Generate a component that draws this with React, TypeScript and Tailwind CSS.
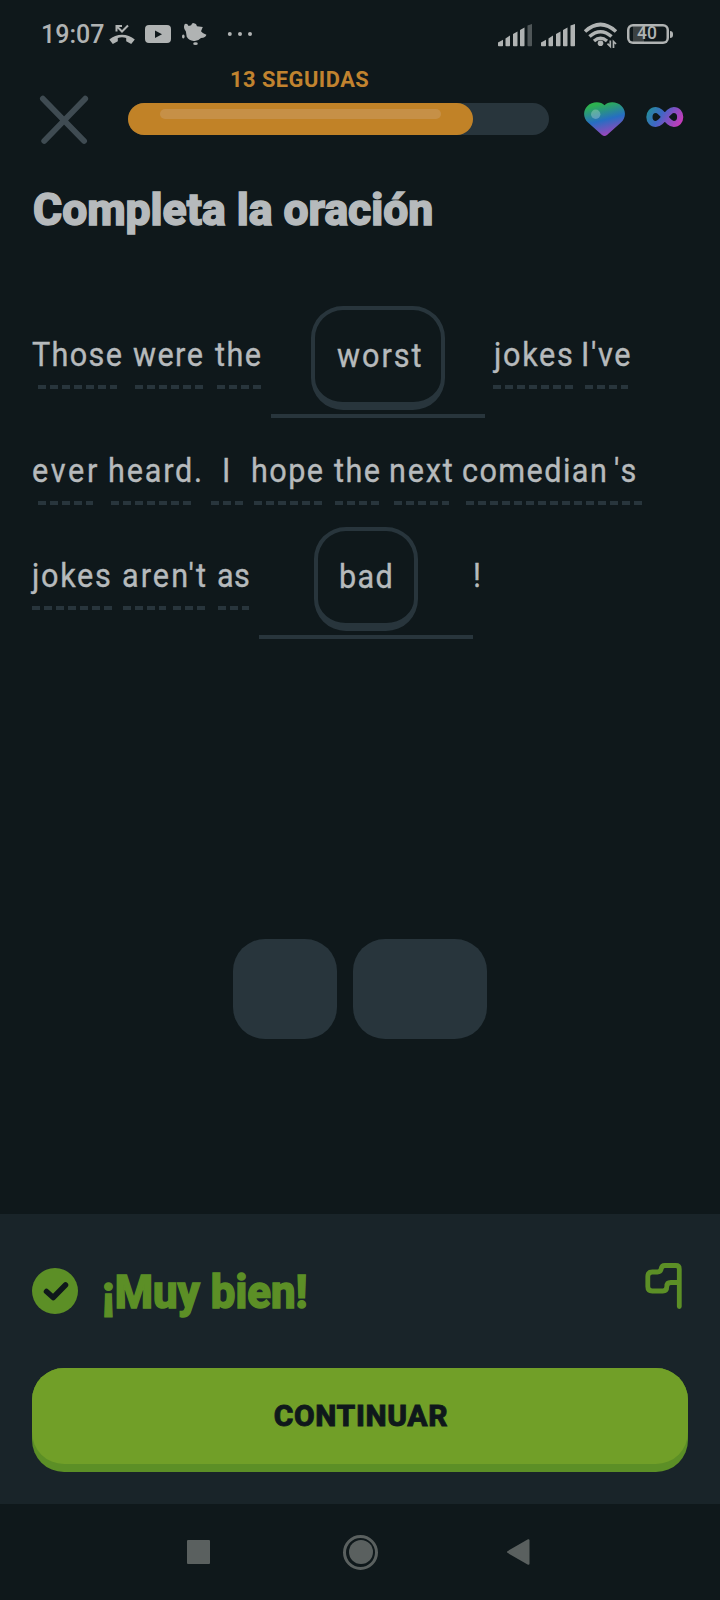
import type { ReactNode } from "react";

type WordProps = {
  children: ReactNode;
  width: string;
  tracking?: string;
  dash?: string;
  secondDash?: string;
};

const glyphs =
  "inline-block origin-left scale-x-90 whitespace-nowrap text-[34px] leading-[40px] [-webkit-text-stroke:0.4px_#b6babc]";

const dashes =
  "h-1 bg-[repeating-linear-gradient(90deg,#28353c_0_8px,transparent_8px_12px)]";

function Word({ children, width, tracking = "tracking-[1.6px]", dash, secondDash }: WordProps) {
  return (
    <div className={`${width} shrink-0`}>
      <div className="h-[40px] pl-[0.3px]">
        <span className={`${glyphs} ${tracking}`}>{children}</span>
      </div>
      {dash && (
        <div className="mt-[11px] flex">
          <div className={`${dash} ${dashes} shrink-0`} />
          {secondDash && <div className={`${secondDash} ${dashes} shrink-0`} />}
        </div>
      )}
    </div>
  );
}

function Blank({ children, chip }: { children: ReactNode; chip: string }) {
  return (
    <div className="flex w-[214px] shrink-0 flex-col items-center">
      <div
        className={`${chip} flex h-[104px] rounded-[32px] border-4 border-b-8 border-[#28353c] pt-[25px]`}
      >
        {children}
      </div>
      <div className="mt-1 h-1 w-full bg-[#28353c]" />
    </div>
  );
}

function Bars({ dimLast }: { dimLast?: boolean }) {
  return (
    <svg width="35" height="24" viewBox="0 0 35 24" fill="#b0b3b3">
      <path d="M0 18.500 5 15.800v5.700q0 .8-.8.8H.8q-.8 0-.8-.8Z" />
      <path d="M7.500 14.500 12 11.500V21.500q0 .8-.8.8H8.300q-.8 0-.8-.8Z" />
      <path d="M15 10 19.500 7.500v14q0 .8-.8.8h-2.900q-.8 0-.8-.8Z" />
      <path d="M22 6 26.500 3.500v18q0 .8-.8.8h-2.900q-.8 0-.8-.8Z" />
      <path d="M29.500 1.500 34 0v21.500q0 .8-.8.8h-2.900q-.8 0-.8-.8Z" opacity={dimLast ? 0.4 : 1} />
    </svg>
  );
}

function StatusBar() {
  return (
    <div className="flex h-[68px] items-start pl-[41px]">
      <div className="w-[68px] pt-[20px] text-[25px] leading-[30px] font-medium text-[#b0b3b3]">
        19:07
      </div>
      <svg className="mt-[22px]" width="148" height="26" viewBox="109 22 148 26" fill="#b0b3b3">
        <path d="M109.300 39.500c7-6.500 18.500-6.500 25.500 0l-3.600 4.500-5-2.800v-3.200c-2.800-1-5.600-1-8.400 0v3.200l-5 2.800Z" />
        <path d="M116.500 31.500V26h5.500M117 26.500l5 5 6-6" fill="none" stroke="#b0b3b3" strokeWidth="2" />
        <path d="M149 25h18q4 0 4 4v10q0 4-4 4h-18q-4 0-4-4V29q0-4 4-4Zm6 5.500v7.500l7-3.750Z" fillRule="evenodd" />
        <path d="M184.800 24q2.400-1.200 3.800 2l2.500-.8q1.400-3.500 3.500-1.700 1.600-.3 2.400 2.700l5.800.8-1.800 4.200q1.500 2.300 5.400 3.600-.5 3-5.400 3.200-3.500 3.700-7.500 3-4.500-.5-6.800-4.200l-.8-5.300q-3.200-3.500-1.100-7.500Z" />
        <ellipse cx="183.300" cy="36.500" rx="1.300" ry="2" />
        <ellipse cx="195.500" cy="43.700" rx="2.300" ry="1.400" />
        <circle cx="229.800" cy="34" r="2" />
        <circle cx="240" cy="34" r="2" />
        <circle cx="250" cy="34" r="2" />
      </svg>
      <div className="mt-[24px] ml-[241px] flex gap-2">
        <Bars dimLast />
        <Bars />
      </div>
      <svg className="mt-[22px] ml-[7px]" width="36" height="27" viewBox="583 22 36 27" fill="none" stroke="#b0b3b3">
        <path d="M585 31.500q15.500-14 31 0" strokeWidth="3.600" />
        <path d="M589.500 36.500q11-9.500 22 0" strokeWidth="3.600" />
        <path d="M594 41q6.500-5.500 13 0" strokeWidth="3.400" />
        <circle cx="600.500" cy="43.300" r="2.800" fill="#b0b3b3" stroke="none" />
        <path d="M610.300 40.500v6l-2.800-2.800M613.500 48v-6.500l2.500 2.500" strokeWidth="1.700" />
      </svg>
      <div className="mt-[24px] ml-[8px] flex items-center">
        <div className="flex h-[20px] w-[42px] items-center justify-center rounded-[6px] bg-[linear-gradient(90deg,transparent_6px,#3b4142_6px_17px,transparent_17px)] pr-[2px] text-[17.500px] leading-none font-medium text-[#b0b3b3] shadow-[inset_0_0_0_2.500px_#b0b3b3]">
          40
        </div>
        <div className="ml-px h-[7px] w-[3px] rounded-r-sm bg-[#b0b3b3]" />
      </div>
    </div>
  );
}

function LessonHeader() {
  return (
    <div className="flex h-[92px]">
      <svg className="mt-[27px] ml-[39px]" width="50" height="50" viewBox="39 95 50 50" stroke="#3f4b52" strokeWidth="5.800" strokeLinecap="round">
        <path d="m42.900 98.700 41.200 42.300M85.200 98.700 44.200 141" />
      </svg>
      <div className="ml-[39px] w-[421px]">
        <div className="h-[35px] pl-[102px] whitespace-nowrap">
          <span className="inline-block origin-left scale-x-[0.970] text-[22.500px] leading-[22px] font-bold tracking-[0.500px] text-[#c1832f]">
            13 SEGUIDAS
          </span>
        </div>
        <div className="h-8 rounded-full bg-[#28353c]">
          <div className="h-8 w-[344.500px] rounded-full bg-[#c18227] pt-[6px] pl-8">
            <div className="h-[10px] w-[281px] rounded-full bg-[#c69047]" />
          </div>
        </div>
      </div>
      <svg className="mt-[34px] ml-[35px]" width="42" height="35" viewBox="0 0 42 35">
        <defs>
          <linearGradient id="heart" x1="10" y1="0" x2="19" y2="35" gradientUnits="userSpaceOnUse">
            <stop offset="0.080" stopColor="#2db24f" />
            <stop offset="0.550" stopColor="#266ec2" />
            <stop offset="1" stopColor="#a144bb" />
          </linearGradient>
        </defs>
        <path d="M20.500 3.200C24-.7 33-.8 37.500 4c5 5 4.300 12-.5 16.500L23 33q-2.500 2-5 0L4 20.500C-1 16-1.200 8.500 3.500 4 8-.8 17-.7 20.500 3.200Z" fill="url(#heart)" />
        <circle cx="11.700" cy="12.300" r="4.700" fill="#fff" opacity="0.250" />
      </svg>
      <svg className="mt-[38px] ml-[19.500px]" width="38" height="22" viewBox="0 0 38 22" fill="none">
        <defs>
          <linearGradient id="loop" x1="3" y1="3" x2="32" y2="21" gradientUnits="userSpaceOnUse">
            <stop offset="0" stopColor="#248c9c" />
            <stop offset="0.380" stopColor="#3e67c5" />
            <stop offset="0.650" stopColor="#8050c2" />
            <stop offset="1" stopColor="#c43cb9" />
          </linearGradient>
        </defs>
        <path d="M18.800 11C15.500 7 13 4 9.800 4 6 4 3.400 7 3.400 11s2.600 7 6.400 7c3.200 0 5.700-3 9-7s5.800-7 9-7c3.800 0 6.400 3 6.400 7s-2.600 7-6.400 7c-3.200 0-5.700-3-9-7Z" stroke="url(#loop)" strokeWidth="6.200" />
      </svg>
    </div>
  );
}

function Sentence() {
  return (
    <div className="pl-[32px] text-[#b6babc]">
      <div className="flex h-[112px]">
        <div className="flex pt-[28px]">
          <Word width="w-[101px]" dash="ml-[6px] w-[79px]" tracking="tracking-[1.500px]">Those</Word>
          <Word width="w-[82px]" dash="ml-[2px] w-[68px]">were</Word>
          <Word width="w-[56px]" dash="ml-[2px] w-[44px]">the</Word>
        </div>
        <Blank chip="w-[134px] pl-[22px]">
          <span className={`${glyphs} tracking-[2.200px]`}>worst</span>
        </Blank>
        <div className="flex pt-[28px] pl-[9px]">
          <Word width="w-[87px]" dash="ml-[-1px] w-[80px]" tracking="tracking-[1.900px]">jokes</Word>
          <Word width="w-[60px]" dash="ml-[4px] w-[43px]" tracking="tracking-[1.800px]">I've</Word>
        </div>
      </div>
      <div className="flex h-[109px] pt-[32px]">
        <Word width="w-[76px]" dash="ml-[6px] w-[55px]" tracking="tracking-[3px]">ever</Word>
        <Word width="w-[114px]" dash="ml-[3px] w-[80px]" tracking="tracking-[2px]">heard.</Word>
        <Word width="w-[29px]" dash="ml-[-11px] w-[32px]">I</Word>
        <Word width="w-[83px]" dash="ml-[3px] w-[68px]">hope</Word>
        <Word width="w-[55px]" dash="ml-[1px] w-[44px]">the</Word>
        <Word width="w-[73px]" dash="ml-[5px] w-[55px]" tracking="tracking-[2px]">next</Word>
        <Word width="w-[152px]" dash="ml-[4px] w-[176px]">comedian</Word>
        <Word width="w-[30px]" tracking="tracking-[2.700px]">'s</Word>
      </div>
      <div className="flex h-[112px]">
        <div className="flex pt-[28px]">
          <Word width="w-[90px]" dash="w-[80px]" tracking="tracking-[1.900px]">jokes</Word>
          <Word width="w-[95px]" dash="ml-[1px] w-[43px]" secondDash="ml-[7px] w-[32px]" tracking="tracking-[2.300px]">
            aren't
          </Word>
          <Word width="w-[42px]" dash="ml-[1px] w-[31px]" tracking="tracking-[0.500px]">as</Word>
        </div>
        <Blank chip="w-[104px] pl-[21px]">
          <span className={`${glyphs} tracking-[1.500px]`}>bad</span>
        </Blank>
        <div className="flex pt-[28px]">
          <Word width="w-[20px]">!</Word>
        </div>
      </div>
    </div>
  );
}

function ResultPanel() {
  return (
    <div className="h-[290px] bg-[#192429] px-8 pt-[48px]">
      <div className="flex h-[106px]">
        <svg className="mt-[6px] shrink-0" width="46" height="46" viewBox="0 0 46 46">
          <circle cx="23" cy="23" r="23" fill="#5c8f26" />
          <path d="m14.500 23.500 6.700 6L33.500 17" fill="none" stroke="#0f181b" strokeWidth="5.500" strokeLinecap="round" strokeLinejoin="round" />
        </svg>
        <div className="mt-[5px] ml-[24px] grow">
          <span className="inline-block origin-left scale-x-[0.950] text-[46px] leading-[50px] font-extrabold whitespace-nowrap text-[#5c8f26] [-webkit-text-stroke:1.500px_#5c8f26]">
            ¡Muy bien!
          </span>
        </div>
        <svg className="mr-[4px] shrink-0" width="40" height="48" viewBox="644 1262 40 48" fill="none" stroke="#5c8f26" strokeWidth="4.800" strokeLinecap="round" strokeLinejoin="round">
          <path d="M679.300 1306.500V1269q0-3.500-3.500-3.500h-11q-3 0-3.700 3.500-.6 3-3.600 3h-5.200q-4.500 0-4.500 4.500v10q0 4.500 4.500 4.500h10.500q4 0 4-4.500 0-4 4-4h8" />
        </svg>
      </div>
      <button className="block h-[104px] w-full rounded-[32px] bg-[#5c8f26] pb-2">
        <span className="flex h-[96px] items-center justify-center rounded-[32px] bg-[#719f28]">
          <span className="inline-block pl-[2px] text-[30px] leading-[36px] font-extrabold tracking-[0.600px] text-[#0f181b] [-webkit-text-stroke:0.800px_#0f181b]">
            CONTINUAR
          </span>
        </span>
      </button>
    </div>
  );
}

function NavBar() {
  return (
    <div className="flex h-[96px] items-center">
      <div className="ml-[186.500px] size-[23.500px] rounded-[1px] bg-[#5a605f]" />
      <div className="ml-[133px] flex size-[35px] items-center justify-center rounded-full border-[3px] border-[#5a605f]">
        <div className="size-[24px] shrink-0 rounded-full bg-[#5a605f]" />
      </div>
      <svg className="ml-[128px]" width="24" height="28" viewBox="0 0 24 28">
        <path d="M2 14 22.500 2.200v23.600Z" fill="#5a605f" stroke="#5a605f" strokeWidth="2" strokeLinejoin="round" />
      </svg>
    </div>
  );
}

export default function App() {
  return (
    <div className="flex h-[1600px] w-[720px] flex-col overflow-hidden bg-[#0f181b] font-[Roboto,'Liberation_Sans',sans-serif]">
      <StatusBar />
      <LessonHeader />
      <h1 className="h-[146px] pt-[24px] pl-[33px] text-[#b6babc]">
        <span className="inline-block origin-left scale-x-[0.988] text-[45px] leading-[52px] font-extrabold whitespace-nowrap [-webkit-text-stroke:1.500px_#b6babc]">
          Completa la oración
        </span>
      </h1>
      <Sentence />
      <div className="mt-[300px] flex h-[100px] justify-center gap-4">
        <div className="w-[104px] rounded-[32px] bg-[#28353c]" />
        <div className="w-[134px] rounded-[32px] bg-[#28353c]" />
      </div>
      <div className="mt-auto">
        <ResultPanel />
        <NavBar />
      </div>
    </div>
  );
}
